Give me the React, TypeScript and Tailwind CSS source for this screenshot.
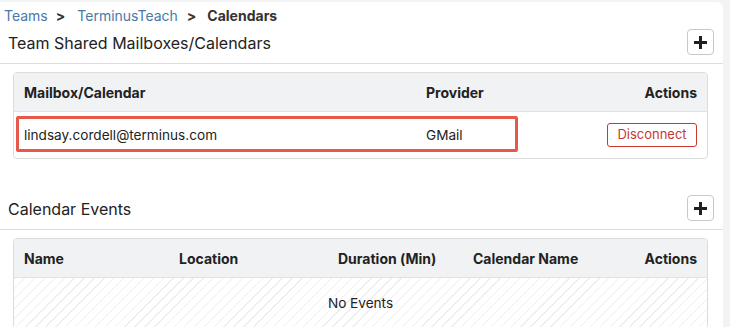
import React from "react";

const Plus = () => (
  <button className="flex h-[26px] w-[27px] items-center justify-center rounded-[4px] border border-[#c8c8c8] bg-white">
    <svg width="13" height="13" viewBox="0 0 13 13">
      <rect x="5" y="0" width="3" height="13" fill="#1f1f1f" />
      <rect x="0" y="5" width="13" height="3" fill="#1f1f1f" />
    </svg>
  </button>
);

export default function App() {
  return (
    <div
      className="h-[327px] w-[730px] overflow-hidden bg-[#f2f3f5] pt-[2px] pr-[7px] text-[#222]"
      style={{ fontFamily: "Inter, 'Helvetica Neue', Arial, sans-serif" }}
    >
      <div className="h-[400px] rounded-tr-[6px] bg-white">
        {/* breadcrumb */}
        <div className="flex h-[27px] items-center pl-[4px] text-[14px]">
          <span className="text-[#4a78a6]">Teams</span>
          <span className="ml-[8px] mr-[12px] font-bold text-[#333]">&gt;</span>
          <span className="text-[#4a78a6]">TerminusTeach</span>
          <span className="ml-[9px] mr-[11px] font-bold text-[#333]">&gt;</span>
          <span className="font-bold text-[#333]">Calendars</span>
        </div>

        {/* section 1 header */}
        <div className="border-b border-[#dedede] pb-[8px] pl-[8px] pr-[9px]">
          <div className="flex h-[26px] items-center justify-between">
            <span className="mt-[2px] text-[16px]">Team Shared Mailboxes/Calendars</span>
            <Plus />
          </div>
        </div>

        {/* table 1 */}
        <div className="ml-[13px] mr-[15px] mt-[8px] overflow-hidden rounded-[4px] border border-[#dcdcdc]">
          <div className="flex h-[39px] items-center border-b border-[#e2e2e2] bg-[#f1f2f4] text-[14px] font-bold">
            <div className="w-[402px] pl-[10px]">Mailbox/Calendar</div>
            <div className="w-[150px] pl-[10px]">Provider</div>
            <div className="flex-1 pr-[10px] text-right">Actions</div>
          </div>
          <div className="relative flex h-[46px] items-center text-[13.6px]">
            <div className="w-[402px] pl-[10px]">lindsay.cordell@terminus.com</div>
            <div className="w-[150px] pl-[10px]">GMail</div>
            <div className="flex flex-1 justify-end pr-[10px]">
              <button className="flex h-[24px] w-[90px] items-center justify-center rounded-[3px] border border-[#c9372e] text-[13px] text-[#c9372e]">
                Disconnect
              </button>
            </div>
            <div className="pointer-events-none absolute left-[2px] top-[4px] h-[36px] w-[502px] rounded-[2px] border-[3px] border-[#e6574c]" />
          </div>
        </div>

        {/* section 2 header */}
        <div className="mt-[36px] border-b border-[#dedede] pb-[8px] pl-[8px] pr-[9px]">
          <div className="flex h-[26px] items-center justify-between">
            <span className="mt-[2px] text-[16px]">Calendar Events</span>
            <Plus />
          </div>
        </div>

        {/* table 2 */}
        <div className="ml-[13px] mr-[15px] mt-[8px] overflow-hidden rounded-[4px] border border-[#dcdcdc]">
          <div className="flex h-[39px] items-center border-b border-[#e2e2e2] bg-[#f1f2f4] text-[14px] font-bold">
            <div className="w-[155px] pl-[10px]">Name</div>
            <div className="w-[159px] pl-[10px]">Location</div>
            <div className="w-[135px] pl-[10px]">Duration (Min)</div>
            <div className="w-[160px] pl-[10px]">Calendar Name</div>
            <div className="flex-1 pr-[10px] text-right">Actions</div>
          </div>
          <div className="flex h-[50px] items-center justify-center bg-[repeating-linear-gradient(-45deg,#ffffff_0px,#ffffff_6px,#eeeeee_6px,#eeeeee_7px)] text-[13.6px]">
            No Events
          </div>
        </div>
      </div>
    </div>
  );
}
